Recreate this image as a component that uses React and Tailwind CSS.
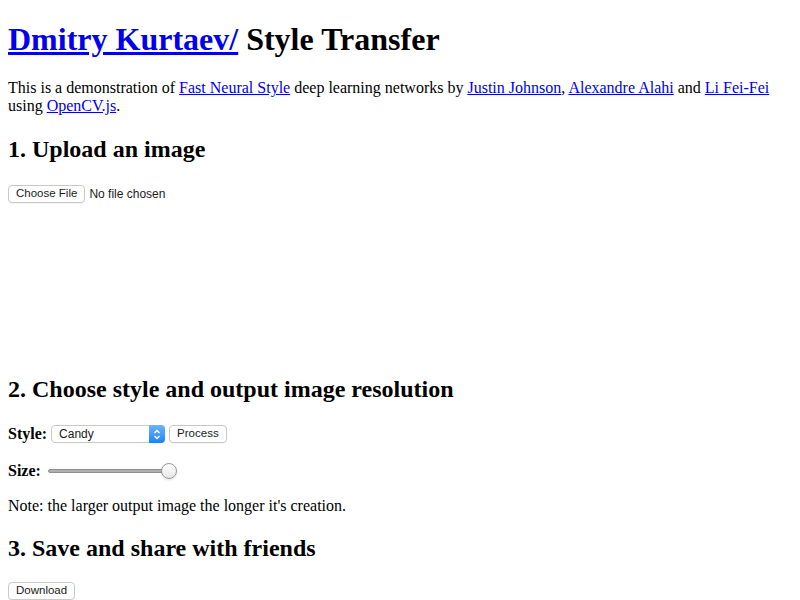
import React from 'react';

const serif = { fontFamily: '"Liberation Serif", "Times New Roman", serif' };
const sans = { fontFamily: '"Liberation Sans", Arial, sans-serif' };

function NativeButton({ children }) {
  return (
    <span
      className="inline-flex h-[18px] items-center rounded-[4px] border border-[#c8c8c8] bg-white px-[7px] text-[11.5px] leading-none text-[#1a1a1a] shadow-[0_1px_0_rgba(0,0,0,0.04)]"
      style={sans}
    >
      {children}
    </span>
  );
}

function Link({ children }) {
  return <a className="text-[#0000ee] underline">{children}</a>;
}

export default function App() {
  return (
    <div className="min-h-screen bg-white px-2 text-black" style={serif}>
      {/* Title */}
      <h1 className="pt-[21px] text-[32px] font-bold leading-[37px]">
        <Link>Dmitry Kurtaev/</Link> Style Transfer
      </h1>

      <p className="mt-[21px] text-[16px] leading-[18px]">
        This is a demonstration of <Link>Fast Neural Style</Link> deep learning networks by{' '}
        <Link>Justin Johnson</Link>, <Link>Alexandre Alahi</Link> and <Link>Li Fei-Fei</Link> using{' '}
        <Link>OpenCV.js</Link>.
      </p>

      <h2 className="mt-[20px] text-[24px] font-bold leading-[28px]">1. Upload an image</h2>

      <div className="mt-[22px] flex items-center gap-[4px]">
        <NativeButton>Choose File</NativeButton>
        <span className="text-[12px] text-[#1a1a1a]" style={sans}>
          No file chosen
        </span>
      </div>

      {/* empty canvas area */}
      <div className="h-[150px] w-[300px]" />

      <h2 className="mt-[22px] text-[24px] font-bold leading-[28px]">
        2. Choose style and output image resolution
      </h2>

      <div className="mt-[19px] flex items-center gap-[4px]">
        <span className="text-[16px] font-bold">Style:</span>
        <span
          className="relative flex h-[18px] w-[114px] items-center rounded-[4px] border border-[#c8c8c8] bg-white pl-[7px] text-[12px] text-[#1a1a1a]"
          style={sans}
        >
          Candy
          <span className="absolute -right-px -top-px flex h-[18px] w-[16px] items-center justify-center rounded-r-[4px] bg-gradient-to-b from-[#6cb3fa] to-[#1a82fb]">
            <svg width="8" height="11" viewBox="0 0 8 11" fill="none" stroke="white" strokeWidth="1.4">
              <path d="M1.5 4 L4 1.5 L6.5 4" />
              <path d="M1.5 7 L4 9.5 L6.5 7" />
            </svg>
          </span>
        </span>
        <NativeButton>Process</NativeButton>
      </div>

      <div className="mt-[13px] flex items-center gap-[6px]">
        <span className="text-[16px] font-bold">Size:</span>
        <span className="relative flex h-[16px] w-[130px] items-center">
          <span className="ml-[1px] h-[4px] w-[120px] rounded-full border border-[#8f8f8f] bg-[#b0b0b0]" />
          <span className="absolute left-[114px] top-0 h-[16px] w-[16px] rounded-full border border-[#9a9a9a] bg-gradient-to-b from-white to-[#e6e6e6] shadow-sm" />
        </span>
      </div>

      <p className="mt-[14px] text-[16px] leading-[18px]">
        Note: the larger output image the longer it's creation.
      </p>

      <h2 className="mt-[19px] text-[24px] font-bold leading-[28px]">3. Save and share with friends</h2>

      <div className="mt-[15px]">
        <NativeButton>Download</NativeButton>
      </div>
    </div>
  );
}
